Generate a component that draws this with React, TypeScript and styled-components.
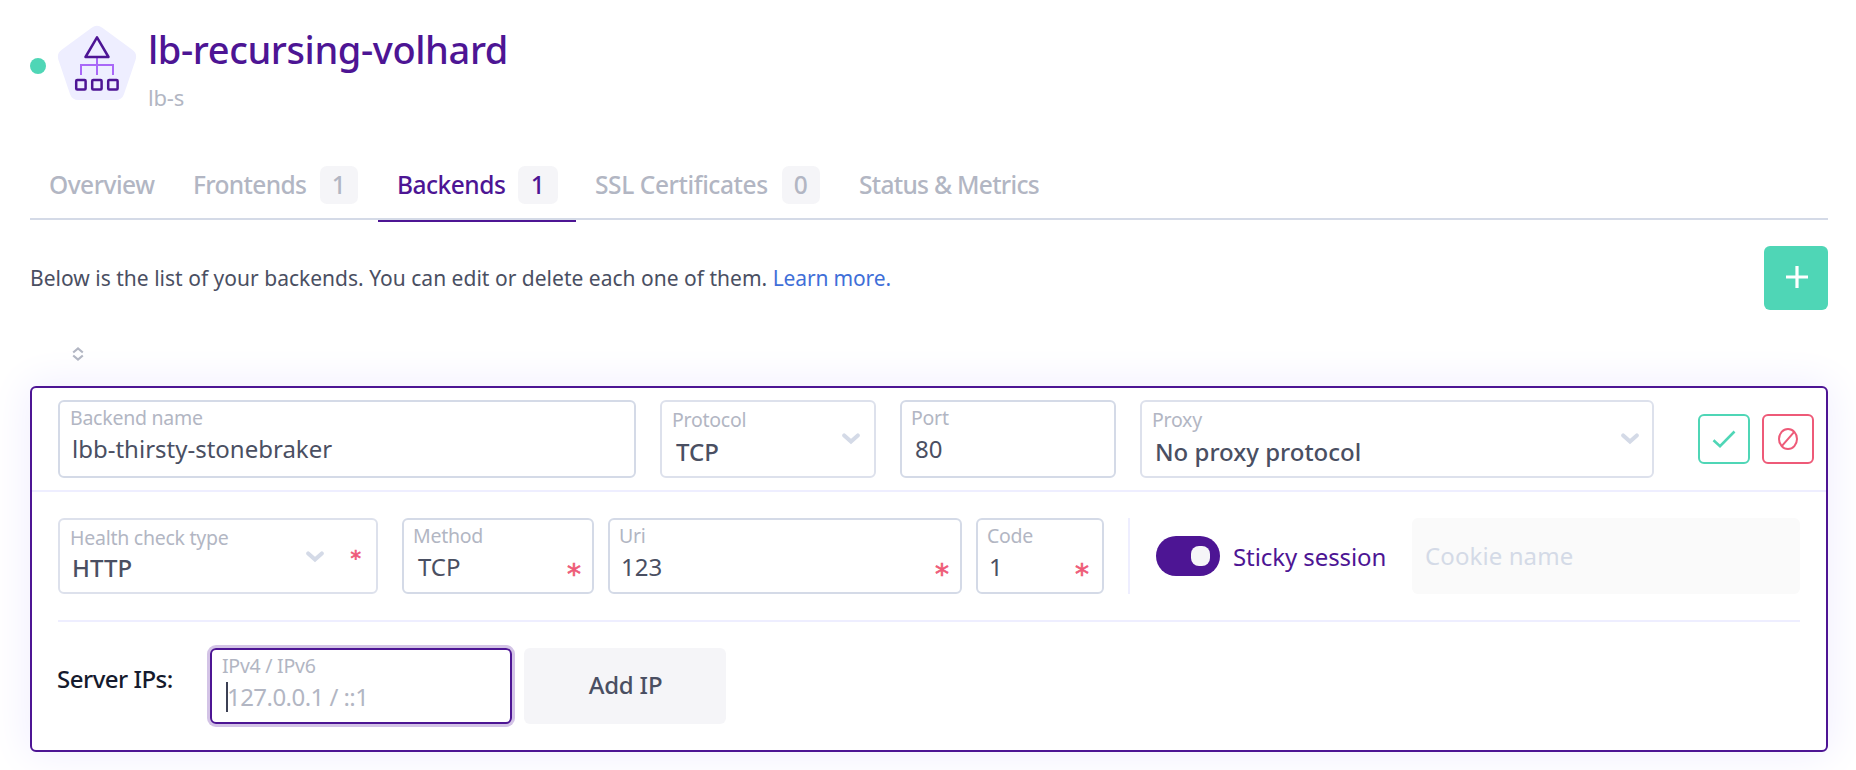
import React from 'react';
import styled, { createGlobalStyle, css } from 'styled-components';

const c = {
  purple: '#4d1594',
  green: '#4fd6b6',
  red: '#ee5a78',
  text: '#4a4f62',
  dark: '#151a2d',
  muted: '#b2b6c3',
  border: '#d4dae7',
  softBorder: '#dde1ec',
  divider: '#eeeeff',
  surface: '#f5f5f8',
};

const GlobalStyle = createGlobalStyle`
  * { box-sizing: border-box; }
  body {
    margin: 0;
    background: #fff;
    color: ${c.text};
    font-family: "Noto Sans", "Open Sans", sans-serif;
    overflow: hidden;
  }
  button { font-family: inherit; cursor: pointer; }
`;

const Page = styled.main`
  width: 1856px;
  height: 770px;
  padding: 0 28px 0 30px;
  overflow: hidden;
`;

const Header = styled.header`
  display: flex;
  height: 148px;
  padding-top: 25px;
`;

const StatusDot = styled.span`
  width: 16px;
  height: 16px;
  margin: 33px 11px 0 0;
  border-radius: 50%;
  background: ${c.green};
`;

const Logo = styled.svg`
  display: block;
  width: 80px;
  height: 76px;
  margin-right: 11px;
`;

const Title = styled.h1`
  margin: 0;
  font-size: 38px;
  font-weight: 500;
  line-height: 48px;
  letter-spacing: -0.4px;
  color: ${c.purple};
`;

const Subtitle = styled.p`
  margin: 10px 0 0;
  font-size: 22px;
  line-height: 28px;
  letter-spacing: -0.2px;
  color: ${c.muted};
`;

const Tabs = styled.nav`
  display: flex;
  height: 72px;
  border-bottom: 2px solid ${c.border};
`;

const Tab = styled.a<{ $width: number; $active?: boolean; $tracking?: number }>`
  position: relative;
  display: flex;
  justify-content: space-between;
  width: ${p => p.$width}px;
  padding: 18px ${p => (p.$active ? 18 : 20)}px 0 19px;
  font-size: 24.5px;
  font-weight: 500;
  line-height: 38px;
  letter-spacing: ${p => p.$tracking ?? -0.5}px;
  white-space: nowrap;
  color: ${p => (p.$active ? c.purple : c.muted)};
  ${p =>
    p.$active &&
    css`
      &::after {
        content: '';
        position: absolute;
        inset: auto 0 -4px 0;
        height: 2px;
        background: ${c.purple};
      }
    `}
`;

const Count = styled.span<{ $wide?: boolean }>`
  width: ${p => (p.$wide ? 40 : 38)}px;
  height: 38px;
  padding-right: 1px;
  border-radius: 7px;
  background: ${c.surface};
  text-align: center;
`;

const Intro = styled.div`
  display: flex;
  justify-content: space-between;
  height: 90px;
  padding-top: 26px;
`;

const IntroText = styled.p`
  margin: 18px 0 0;
  font-size: 21px;
  line-height: 28px;
  letter-spacing: 0.015px;
`;

const Link = styled.a`
  color: #3f6fd8;
  letter-spacing: -0.15px;
`;

const AddButton = styled.button`
  display: grid;
  place-items: center;
  width: 64px;
  height: 64px;
  padding: 0 0 2px 2px;
  border: 0;
  border-radius: 6px;
  background: ${c.green};
`;

const SortBar = styled.div`
  height: 76px;
  padding: 37px 0 0 42px;
  svg { display: block; }
`;

const Card = styled.section`
  height: 366px;
  border: 2px solid ${c.purple};
  border-radius: 6px;
  background: #fff;
  box-shadow: 0 0 40px 4px #f1effe;
`;

const MainRow = styled.div`
  display: flex;
  height: 104px;
  padding: 12px 12px 0 26px;
  border-bottom: 2px solid ${c.divider};
`;

const CheckRow = styled.div`
  display: flex;
  height: 130px;
  margin: 0 26px;
  padding-top: 26px;
  border-bottom: 2px solid ${c.divider};
`;

const IpRow = styled.div`
  display: flex;
  padding: 26px 26px 0;
`;

const Box = styled.div<{ $width: number; $gap: number; $height: number; $kind: Kind }>`
  position: relative;
  flex: none;
  width: ${p => p.$width}px;
  height: ${p => p.$height}px;
  margin-right: ${p => p.$gap}px;
  padding-top: ${p => (p.$kind === 'select' ? 8 : 6)}px;
  border: 2px solid
    ${p => (p.$kind === 'focused' ? c.purple : p.$kind === 'select' ? c.softBorder : c.border)};
  border-radius: 6px;
  ${p => p.$kind === 'focused' && 'box-shadow: 0 0 0 3px #d3c3e6;'}
`;

const Label = styled.div<{ $x: number }>`
  height: 20px;
  padding-left: ${p => p.$x - 1}px;
  font-size: 19.5px;
  line-height: 20px;
  letter-spacing: -0.25px;
  white-space: nowrap;
  color: ${c.muted};
`;

const Value = styled.div<{ $x: number; $strong?: boolean; $rise?: number; $placeholder?: boolean }>`
  display: flex;
  height: 28px;
  margin-top: ${p => 7 - (p.$rise ?? 0)}px;
  padding-left: ${p => p.$x - 2}px;
  font-size: 24px;
  font-weight: ${p => (p.$strong ? 500 : 400)};
  line-height: 28px;
  letter-spacing: ${p => (p.$placeholder ? -0.55 : 0)}px;
  white-space: pre;
  color: ${p => (p.$placeholder ? c.muted : c.text)};
`;

const Caret = styled.i`
  width: 2px;
  height: 30px;
  margin: -1px -1px 0 0;
  background: #3c4054;
`;

const Chevron = styled.svg<{ $right: number; $top: number }>`
  position: absolute;
  right: ${p => p.$right}px;
  top: ${p => p.$top}px;
`;

const Star = styled.span<{ $right: number; $top: number; $size: number }>`
  position: absolute;
  right: ${p => p.$right}px;
  top: ${p => p.$top}px;
  font-family: 'DejaVu Sans', sans-serif;
  font-size: ${p => p.$size}px;
  line-height: 30px;
  color: ${c.red};
  -webkit-text-stroke: 0.7px ${c.red};
`;

const IconButton = styled.button<{ $color: string }>`
  display: grid;
  place-items: center;
  width: 52px;
  height: 50px;
  margin: 14px 0 0 12px;
  padding: 0;
  border: 2px solid ${p => p.$color};
  border-radius: 6px;
  background: #fff;
  color: ${p => p.$color};
`;

const Actions = styled.div`
  display: flex;
  margin-left: auto;
`;

const Separator = styled.div`
  width: 2px;
  height: 76px;
  margin-right: 26px;
  background: ${c.divider};
`;

const Toggle = styled.button`
  display: flex;
  justify-content: flex-end;
  align-items: center;
  width: 64px;
  height: 40px;
  margin: 18px 13px 0 0;
  padding: 0 10px 0 0;
  border: 0;
  border-radius: 20px;
  background: ${c.purple};
`;

const Knob = styled.span`
  width: 19px;
  height: 20px;
  border-radius: 8px;
  background: ${c.surface};
`;

const StickyLabel = styled.span`
  width: 179px;
  padding-top: 22px;
  font-size: 24px;
  line-height: 34px;
  letter-spacing: -0.08px;
  white-space: nowrap;
  color: ${c.purple};
`;

const CookieInput = styled.div`
  flex: 1;
  height: 76px;
  padding: 21px 13px;
  border-radius: 6px;
  background: #fafafa;
  font-size: 24px;
  line-height: 34px;
  letter-spacing: 0.1px;
  color: ${c.border};
`;

const IpHeading = styled.h2`
  width: 152px;
  margin: 14px 0 0;
  font-size: 24px;
  font-weight: 500;
  line-height: 34px;
  letter-spacing: -0.5px;
  text-indent: -1px;
  white-space: nowrap;
  color: ${c.dark};
`;

const AddIpButton = styled.button`
  width: 202px;
  height: 76px;
  padding: 0 0 4px 1px;
  border: 0;
  border-radius: 6px;
  background: ${c.surface};
  color: ${c.text};
  font-size: 24px;
  font-weight: 500;
  letter-spacing: -0.2px;
`;

type Kind = 'input' | 'select' | 'focused';

interface FieldProps {
  label: string;
  value: string;
  width: number;
  gap: number;
  height?: number;
  kind?: Kind;
  labelX?: number;
  valueX?: number;
  rise?: number;
  chevron?: [number, number];
  star?: [number, number, number];
}

function Field({
  label, value, width, gap, height = 76, kind = 'input',
  labelX = 10, valueX = 15, rise, chevron, star,
}: FieldProps) {
  const focused = kind === 'focused';
  return (
    <Box $width={width} $gap={gap} $height={height} $kind={kind}>
      <Label $x={labelX}>{label}</Label>
      <Value $x={valueX} $strong={kind === 'select'} $rise={rise} $placeholder={focused}>
        {focused && <Caret />}
        {value}
      </Value>
      {chevron && (
        <Chevron $right={chevron[0]} $top={chevron[1]} width="18" height="12" viewBox="0 0 18 12">
          <path d="M2.2 2.4 9 8.6l6.800-6.200" fill="none" stroke={c.border} strokeWidth="4" strokeLinecap="round" />
        </Chevron>
      )}
      {star && <Star $right={star[0]} $top={star[1]} $size={star[2]}>*</Star>}
    </Box>
  );
}

function BalancerLogo() {
  return (
    <Logo viewBox="57 25 80 76" fill="none">
      <path d="M97 35 127 57 115.500 91H78.500L67 57Z" fill="#eeeeff" stroke="#eeeeff" strokeWidth="18" strokeLinejoin="round" />
      <path d="M97 58v17M81 75V65h32v10" stroke="#a968f8" strokeWidth="2" />
      <path d="M97 37.300 108.500 57h-23Z" stroke={c.purple} strokeWidth="2.500" strokeLinejoin="round" />
      {[76.2, 92.2, 108.2].map(x => (
        <rect key={x} x={x} y="80" width="9.400" height="9.400" rx="1" stroke={c.purple} strokeWidth="2.500" />
      ))}
    </Logo>
  );
}

export default function App() {
  return (
    <>
      <GlobalStyle />
      <Page>
        <Header>
          <StatusDot />
          <BalancerLogo />
          <div>
            <Title>lb-recursing-volhard</Title>
            <Subtitle>lb-s</Subtitle>
          </div>
        </Header>

        <Tabs>
          <Tab $width={144}>Overview</Tab>
          <Tab $width={204} $tracking={-0.65}>Frontends<Count>1</Count></Tab>
          <Tab $width={198} $active>Backends<Count $wide>1</Count></Tab>
          <Tab $width={264} $tracking={-0.4}>SSL Certificates<Count>0</Count></Tab>
          <Tab $width={222} $tracking={-0.7}>Status &amp; Metrics</Tab>
        </Tabs>

        <Intro>
          <IntroText>
            Below is the list of your backends. You can edit or delete each one of them.{' '}
            <Link>Learn more.</Link>
          </IntroText>
          <AddButton aria-label="Add backend">
            <svg width="22" height="22" viewBox="0 0 22 22">
              <path d="M11 0v22M0 11h22" stroke="#fff" strokeWidth="3.200" />
            </svg>
          </AddButton>
        </Intro>

        <SortBar>
          <svg width="12" height="14" viewBox="0 0 12 14" fill="none" stroke={c.muted} strokeWidth="2.200">
            <path d="M1.200 5.500 6 1.500l4.800 4M1.200 8.500 6 12.500l4.800-4" />
          </svg>
        </SortBar>

        <Card>
          <MainRow>
            <Field label="Backend name" value="lbb-thirsty-stonebraker" width={578} gap={24} height={78} labelX={11} valueX={14} />
            <Field label="Protocol" value="TCP" width={216} gap={24} height={78} kind="select" labelX={11} valueX={16} rise={-1} chevron={[14, 31]} />
            <Field label="Port" value="80" width={216} gap={24} height={78} />
            <Field label="Proxy" value="No proxy protocol" width={514} gap={0} height={78} kind="select" labelX={11} valueX={15} rise={-1} chevron={[13, 31]} />
            <Actions>
              <IconButton $color={c.green} aria-label="Save">
                <svg width="24" height="18" viewBox="0 0 24 18" fill="none">
                  <path d="M1.500 10.300 8 16.200 22.500 1.500" stroke="currentColor" strokeWidth="2.600" />
                </svg>
              </IconButton>
              <IconButton $color={c.red} aria-label="Cancel">
                <svg width="20" height="22" viewBox="0 0 20 22" fill="none" stroke="currentColor" strokeWidth="2">
                  <ellipse cx="10" cy="11" rx="9" ry="10" />
                  <path d="M3.800 18.200 16.200 3.800" />
                </svg>
              </IconButton>
            </Actions>
          </MainRow>

          <CheckRow>
            <Field label="Health check type" value="HTTP" width={320} gap={24} kind="select" labelX={11} valueX={14} rise={1} chevron={[52, 31]} star={[15, 24, 21]} />
            <Field label="Method" value="TCP" width={192} gap={14} valueX={16} star={[11, 40, 28]} />
            <Field label="Uri" value="123" width={354} gap={14} valueX={13} star={[11, 40, 28]} />
            <Field label="Code" value="1" width={128} gap={24} valueX={13} star={[13, 40, 28]} />
            <Separator />
            <Toggle role="switch" aria-checked="true"><Knob /></Toggle>
            <StickyLabel>Sticky session</StickyLabel>
            <CookieInput>Cookie name</CookieInput>
          </CheckRow>

          <IpRow>
            <IpHeading>Server IPs:</IpHeading>
            <Field label="IPv4 / IPv6" value="127.0.0.1 / ::1" width={302} gap={12} kind="focused" labelX={11} valueX={16} />
            <AddIpButton>Add IP</AddIpButton>
          </IpRow>
        </Card>
      </Page>
    </>
  );
}
